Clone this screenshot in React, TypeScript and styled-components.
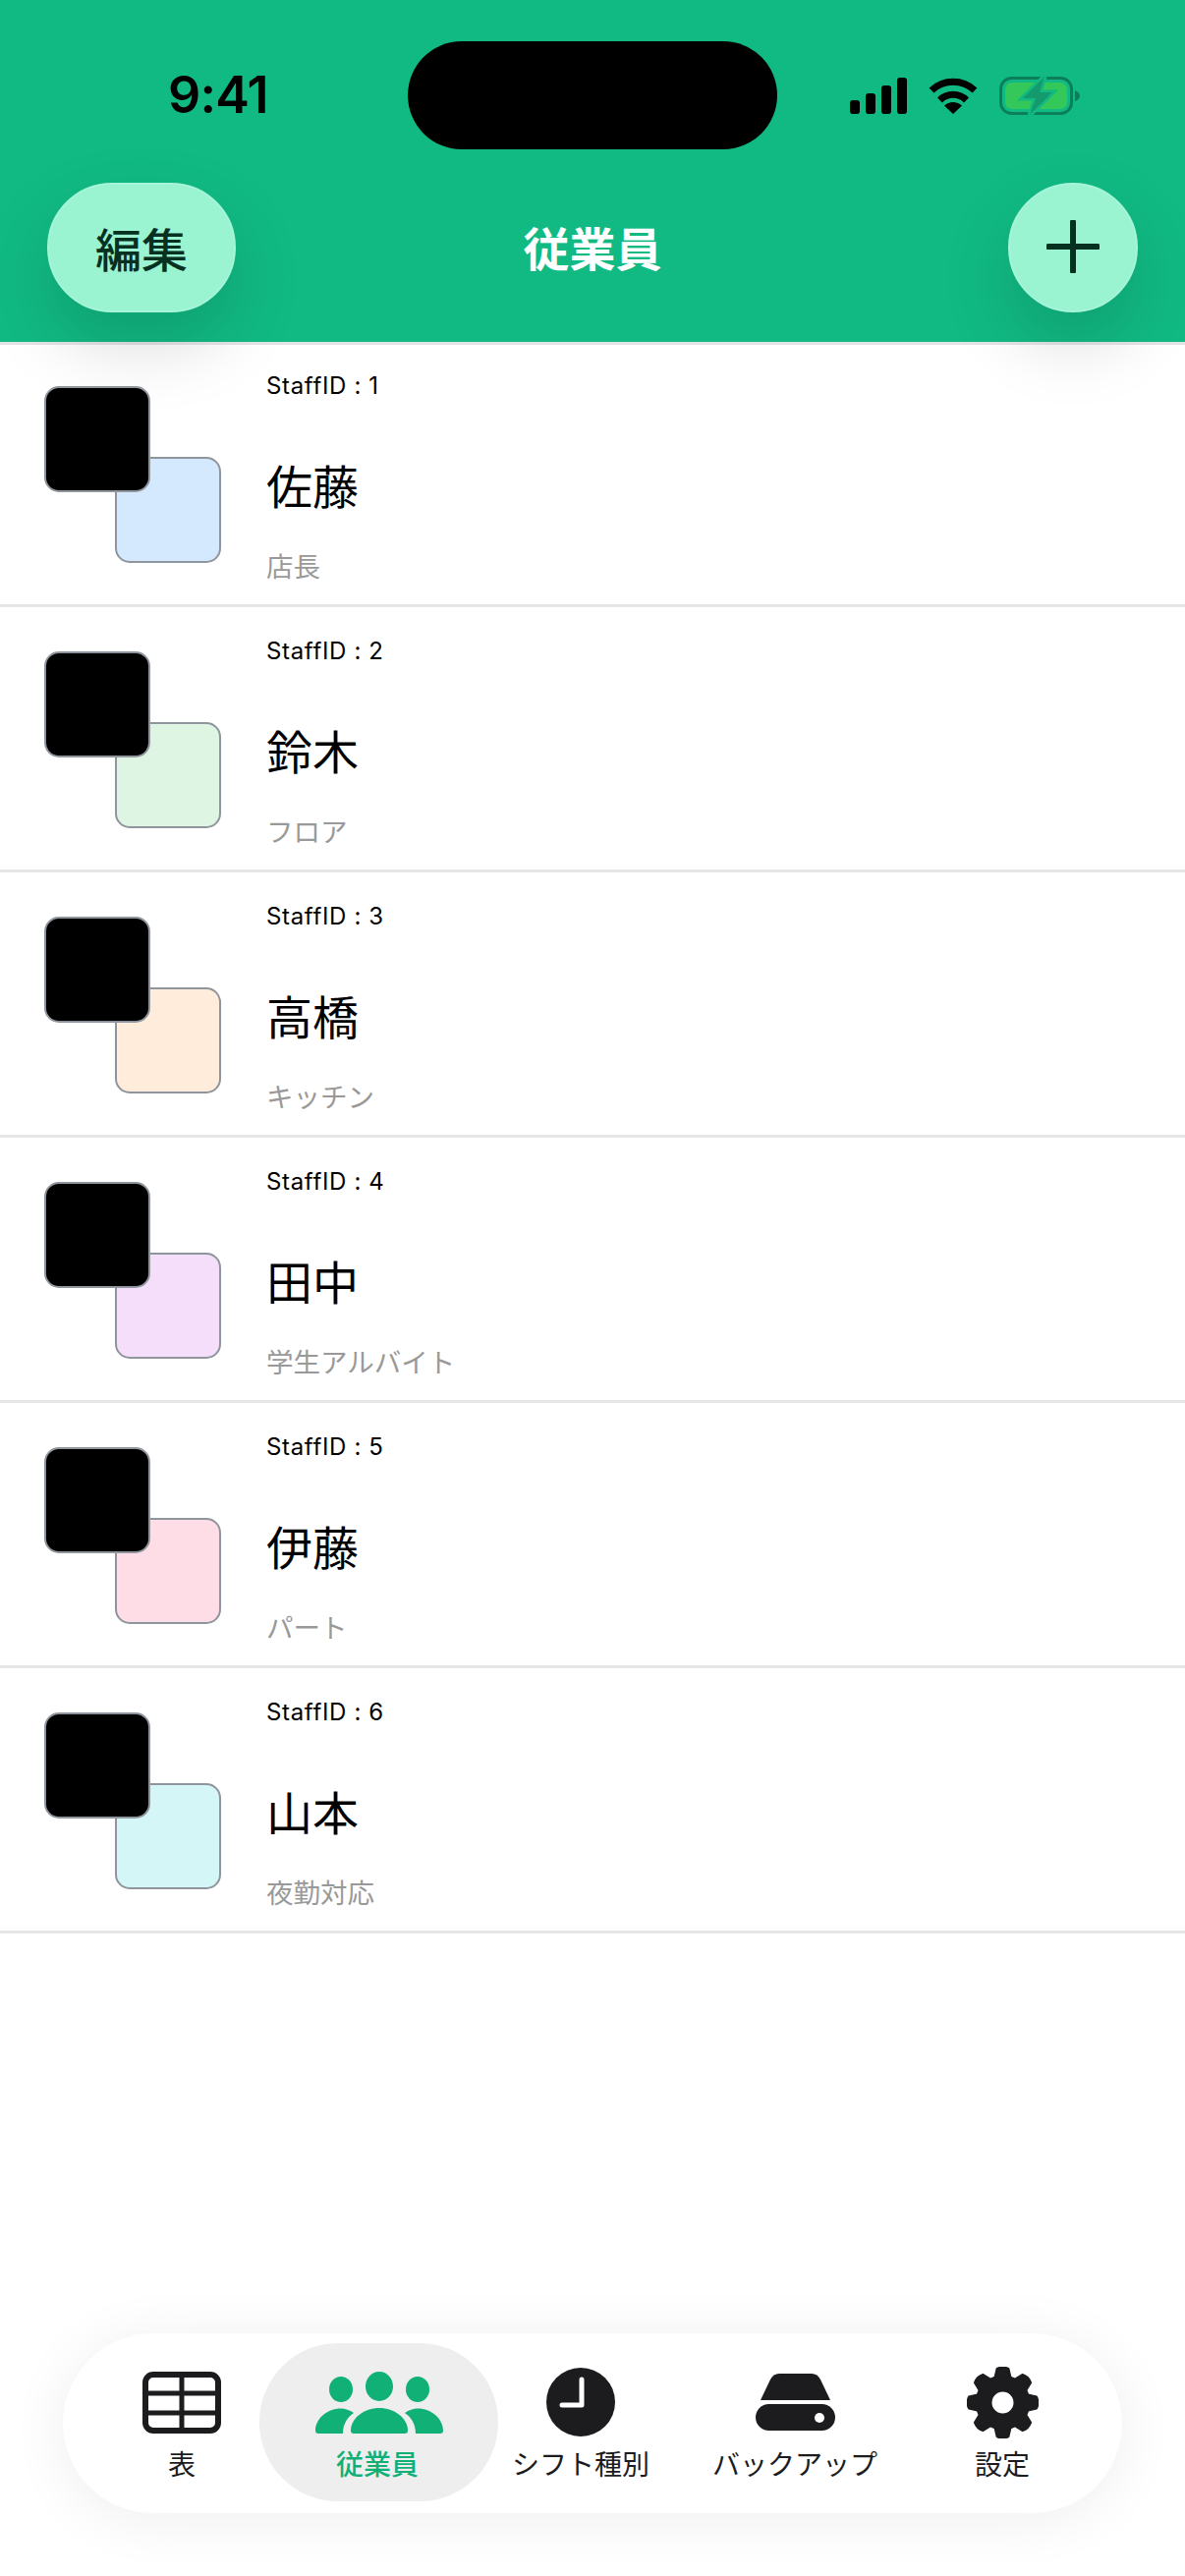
import React from 'react'
import styled, { createGlobalStyle } from 'styled-components'

const jp = `Inter, "Noto Sans CJK JP", sans-serif`

const GlobalStyle = createGlobalStyle`
  html, body {
    margin: 0;
    background: #fff;
    font-family: ${jp};
  }
`

const Page = styled.div`
  width: 1206px;
  height: 2622px;
  display: flex;
  flex-direction: column;
  overflow: hidden;
  background: #fff;
`

const Header = styled.header`
  position: relative;
  z-index: 1;
  height: 351px;
  box-sizing: border-box;
  padding-top: 42px;
  background: #11ba83;
  border-bottom: 3px solid #e4e4e4;
`

const StatusBar = styled.div`
  display: grid;
  grid-template-columns: 1fr 376px 1fr;
  height: 110px;
`

const Time = styled.div`
  justify-self: start;
  margin: 27px 0 0 171px;
  font-size: 52px;
  line-height: 56px;
  font-weight: 600;
  letter-spacing: -0.8px;
  color: #000;
`

const Island = styled.div`
  background: #000;
  border-radius: 55px;
`

const StatusIcons = styled.div`
  display: flex;
  align-items: center;
  gap: 22px;
  padding-left: 74px;
  height: 110px;
  svg {
    display: block;
  }
`

const NavBar = styled.div`
  display: grid;
  grid-template-columns: 1fr auto 1fr;
  align-items: center;
  height: 132px;
  margin-top: 34px;
  padding: 0 48px;
`

const Pill = styled.button<{ $round?: boolean }>`
  display: flex;
  align-items: center;
  justify-content: center;
  justify-self: ${p => (p.$round ? 'end' : 'start')};
  width: ${p => (p.$round ? '132px' : '192px')};
  height: 132px;
  padding: 0 0 2px;
  border: 2px solid #a5f5d8;
  border-radius: 66px;
  background: #9af3d1;
  color: #06301f;
  font-family: ${jp};
  font-size: 47px;
  font-weight: 500;
  box-shadow: 0 32px 72px rgba(0, 0, 0, 0.15);
`

const NavTitle = styled.h1`
  margin: 0 0 4px;
  font-size: 47px;
  font-weight: 700;
  color: #fff;
`

const StaffList = styled.main`
  flex: 1;
  margin-top: -3px;
`

const Row = styled.section`
  display: flex;
  height: 270px;
  box-sizing: border-box;
  padding: 45px 0 0 45px;
  border-bottom: 3px solid #e6e6e6;
`

const AvatarStack = styled.div`
  display: grid;
  grid-template-columns: 72px 36px 72px;
  grid-template-rows: 72px 36px 72px;
  width: 180px;
  height: 180px;
  margin-right: 46px;
`

const Square = styled.div`
  box-sizing: border-box;
  border: 2px solid #8f959c;
  border-radius: 15px;
`

const FrontSquare = styled(Square)`
  grid-area: 1 / 1 / 3 / 3;
  z-index: 1;
  background: #000;
`

const BackSquare = styled(Square)<{ $color: string }>`
  grid-area: 2 / 2 / 4 / 4;
  background: ${p => p.$color};
`

const RowText = styled.div`
  display: flex;
  flex-direction: column;
  margin-top: -14px;
`

const StaffId = styled.div`
  font-size: 24px;
  line-height: 28px;
  letter-spacing: 0.65px;
  color: #000;
`

const Name = styled.div`
  margin-top: 54px;
  font-size: 47px;
  line-height: 70px;
  color: #000;
`

const Role = styled.div`
  margin-top: 26px;
  font-size: 27.5px;
  line-height: 40px;
  color: #999;
`

const TabShell = styled.div`
  padding: 0 64px 64px;
`

const TabBar = styled.nav`
  display: grid;
  grid-template-columns: 158px 243px 168px 268px 154px;
  height: 183px;
  box-sizing: border-box;
  padding: 10px 45px 12px 42px;
  background: #fff;
  border-radius: 92px;
  box-shadow: 0 6px 60px rgba(0, 0, 0, 0.07);
`

const Tab = styled.div<{ $active?: boolean }>`
  display: flex;
  flex-direction: column;
  align-items: center;
  border-radius: 80px;
  background: ${p => (p.$active ? '#eeeeee' : 'transparent')};
  color: ${p => (p.$active ? '#10b077' : '#1c1c1e')};
`

const TabIcon = styled.div`
  display: flex;
  align-items: center;
  justify-content: center;
  height: 72px;
  margin-top: 24px;
  svg {
    display: block;
  }
`

const TabLabel = styled.div<{ $active?: boolean }>`
  margin-top: 8px;
  margin-right: ${p => (p.$active ? '3px' : '0')};
  font-size: 28px;
  line-height: 40px;
  font-weight: ${p => (p.$active ? 500 : 400)};
  white-space: nowrap;
`

const staff = [
  { id: 1, name: '佐藤', role: '店長', color: '#d4e9fe' },
  { id: 2, name: '鈴木', role: 'フロア', color: '#def5e4' },
  { id: 3, name: '高橋', role: 'キッチン', color: '#ffecdb' },
  { id: 4, name: '田中', role: '学生アルバイト', color: '#f4defa' },
  { id: 5, name: '伊藤', role: 'パート', color: '#ffdde6' },
  { id: 6, name: '山本', role: '夜勤対応', color: '#d4f6f7' }
]

const SignalIcon = () => (
  <svg width="58" height="37" viewBox="0 0 58 37">
    <rect x="0" y="23" width="10" height="14" rx="3" />
    <rect x="16" y="16" width="10" height="21" rx="3" />
    <rect x="32" y="8" width="10" height="29" rx="3" />
    <rect x="48" y="0" width="10" height="37" rx="3" />
  </svg>
)

const WifiIcon = () => (
  <svg width="50" height="37" viewBox="0 0 50 37">
    <path d="M3 13A32 32 0 0 1 47 13" fill="none" stroke="#000" strokeWidth="7" />
    <path d="M11.5 23A19 19 0 0 1 38.5 23" fill="none" stroke="#000" strokeWidth="7" />
    <path d="M25 37L16 28.5A13 13 0 0 1 34 28.5Z" />
  </svg>
)

const BatteryIcon = () => (
  <svg width="82" height="41" viewBox="0 0 82 41">
    <rect x="1.5" y="2.5" width="72" height="36" rx="11" fill="none" stroke="#0b7f5b" strokeWidth="3" />
    <rect x="6" y="7" width="63" height="27" rx="7" fill="#34c759" />
    <path d="M77 15C80 16 82 18 82 20.5S80 25 77 26Z" fill="#0b7f5b" />
    <path
      d="M46 1L24 23H37L31 40L54 17H41Z"
      fill="#149a6c"
      stroke="#11ba83"
      strokeWidth="5"
      paintOrder="stroke"
    />
  </svg>
)

const PlusIcon = () => (
  <svg width="54" height="54" viewBox="0 0 54 54">
    <path d="M27 2V52M2 27H52" stroke="#06301f" strokeWidth="6" strokeLinecap="round" />
  </svg>
)

const TableIcon = () => (
  <svg width="80" height="63" viewBox="0 0 80 63" fill="none" stroke="#1c1c1e">
    <rect x="3" y="3" width="74" height="57" rx="8" strokeWidth="6" />
    <path d="M40 3V60M3 22H77M3 42H77" strokeWidth="5" />
  </svg>
)

const bodySide = 'M3 63H28C28 53 33 46 39 42C35 39 30 37.5 26 37.5C12 37.5 0 48 0 60A3 3 0 0 0 3 63Z'

const PeopleIcon = () => (
  <svg width="130" height="63" viewBox="0 0 130 63" fill="#10b077">
    <ellipse cx="26" cy="18" rx="12" ry="13" />
    <ellipse cx="65" cy="15" rx="14" ry="15" />
    <ellipse cx="104" cy="18" rx="12" ry="13" />
    <path d={bodySide} />
    <path d={bodySide} transform="matrix(-1 0 0 1 130 0)" />
    <path d="M39 63H91A3 3 0 0 0 94 60C94 47 80 37 65 37C50 37 36 47 36 60A3 3 0 0 0 39 63Z" />
  </svg>
)

const ClockIcon = () => (
  <svg width="70" height="70" viewBox="0 0 70 70">
    <circle cx="35" cy="35" r="35" fill="#1c1c1e" />
    <path d="M36 12V38H16" fill="none" stroke="#fff" strokeWidth="5" strokeLinecap="round" strokeLinejoin="round" />
  </svg>
)

const DiskIcon = () => (
  <svg width="81" height="58" viewBox="0 0 81 58" fill="#1c1c1e">
    <path d="M5 27L15 6Q18 0 24 0H57Q63 0 66 6L76 27Z" />
    <rect x="0" y="31" width="81" height="27" rx="13.5" />
    <circle cx="65" cy="45" r="5" fill="#fff" />
  </svg>
)

// 8 tooth gear, computed so the teeth stay even
const gearPath = () => {
  const c = 36.5
  const point = (r: number, a: number) =>
    `${(c + r * Math.cos(a)).toFixed(2)} ${(c + r * Math.sin(a)).toFixed(2)}`
  let d = ''
  for (let i = 0; i < 8; i++) {
    const a = (i * Math.PI) / 4 - Math.PI / 2
    d += `${i === 0 ? 'M' : 'L'}${point(27, a - 0.3)}`
    d += `L${point(35, a - 0.17)}Q${point(37.5, a)} ${point(35, a + 0.17)}`
    d += `L${point(27, a + 0.3)}`
  }
  return `${d}ZM${c - 12} ${c}a12 12 0 1 0 24 0a12 12 0 1 0 -24 0Z`
}

const GearIcon = () => (
  <svg width="73" height="73" viewBox="0 0 73 73">
    <path d={gearPath()} fill="#1c1c1e" fillRule="evenodd" stroke="#1c1c1e" strokeWidth="2" strokeLinejoin="round" />
  </svg>
)

const tabs = [
  { label: '表', icon: <TableIcon /> },
  { label: '従業員', icon: <PeopleIcon />, active: true },
  { label: 'シフト種別', icon: <ClockIcon /> },
  { label: 'バックアップ', icon: <DiskIcon /> },
  { label: '設定', icon: <GearIcon /> }
]

const App: React.FC = () => (
  <Page>
    <GlobalStyle />
    <Header>
      <StatusBar>
        <Time>9:41</Time>
        <Island />
        <StatusIcons>
          <SignalIcon />
          <WifiIcon />
          <BatteryIcon />
        </StatusIcons>
      </StatusBar>
      <NavBar>
        <Pill>編集</Pill>
        <NavTitle>従業員</NavTitle>
        <Pill $round>
          <PlusIcon />
        </Pill>
      </NavBar>
    </Header>
    <StaffList>
      {staff.map(s => (
        <Row key={s.id}>
          <AvatarStack>
            <FrontSquare />
            <BackSquare $color={s.color} />
          </AvatarStack>
          <RowText>
            <StaffId>StaffID : {s.id}</StaffId>
            <Name>{s.name}</Name>
            <Role>{s.role}</Role>
          </RowText>
        </Row>
      ))}
    </StaffList>
    <TabShell>
      <TabBar>
        {tabs.map(t => (
          <Tab key={t.label} $active={t.active}>
            <TabIcon>{t.icon}</TabIcon>
            <TabLabel $active={t.active}>{t.label}</TabLabel>
          </Tab>
        ))}
      </TabBar>
    </TabShell>
  </Page>
)

export default App
